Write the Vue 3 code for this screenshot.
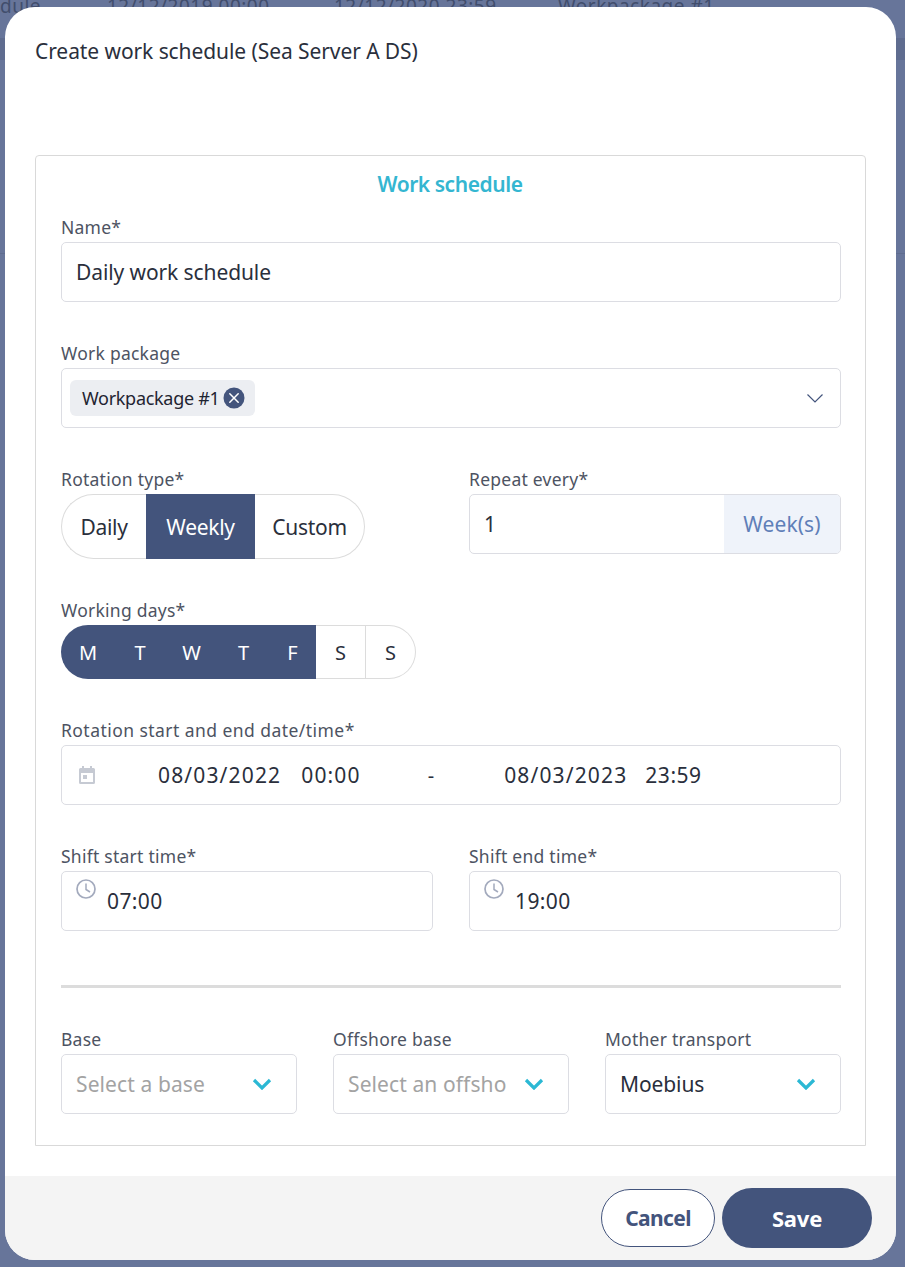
<script setup>
const rotation = [
  { label: 'Daily', cls: 'rot-a' },
  { label: 'Weekly', cls: 'rot-b on' },
  { label: 'Custom', cls: 'rot-c' },
]
const days = [
  { d: 'M', on: true }, { d: 'T', on: true }, { d: 'W', on: true },
  { d: 'T', on: true }, { d: 'F', on: true }, { d: 'S', on: false }, { d: 'S', on: false },
]
const selects = [
  { label: 'Base', value: 'Select a base', ph: true },
  { label: 'Offshore base', value: 'Select an offsho', ph: true },
  { label: 'Mother transport', value: 'Moebius', ph: false },
]
const shifts = [
  { label: 'Shift start time*', value: '07:00' },
  { label: 'Shift end time*', value: '19:00' },
]
</script>

<template>
  <div class="page">
    <div class="backdrop">
      <div class="bg-row">
        <span class="c0">dule</span>
        <span class="c1">12/12/2019 00:00</span>
        <span class="c2">12/12/2020 23:59</span>
        <span class="c3">Workpackage #1</span>
      </div>
      <div class="bg-band"></div>
      <div class="bg-line"></div>
    </div>

    <div class="modal">
      <h1 class="title">Create work schedule (Sea Server A DS)</h1>
      <section class="card">
        <h2 class="card-title">Work schedule</h2>

        <div class="field">
          <label>Name*</label>
          <div class="box"><span class="val">Daily work schedule</span></div>
        </div>

        <div class="field">
          <label>Work package</label>
          <div class="box between tagbox">
            <span class="tag">
              <span class="tag-text">Workpackage #1</span>
              <svg class="tag-x" width="22" height="22" viewBox="0 0 22 22">
                <circle cx="11" cy="11" r="10.5" fill="#43547c" />
                <path d="M6.800 6.800l8.400 8.400M15.200 6.800l-8.400 8.400" stroke="#fff" stroke-width="1.500" stroke-linecap="round" fill="none" />
              </svg>
            </span>
            <svg width="18" height="10" viewBox="0 0 18 10">
              <path d="M1.500 1.500L9 9l7.500-7.500" stroke="#43547c" stroke-width="1.200" fill="none" />
            </svg>
          </div>
        </div>

        <div class="two">
          <div class="field">
            <label>Rotation type*</label>
            <div class="rot">
              <span v-for="r in rotation" :key="r.label" :class="r.cls">{{ r.label }}</span>
            </div>
          </div>
          <div class="field">
            <label>Repeat every*</label>
            <div class="box repeat">
              <span class="val repeat-val">1</span>
              <span class="suffix">Week(s)</span>
            </div>
          </div>
        </div>

        <div class="field">
          <label>Working days*</label>
          <div class="daysrow">
            <span v-for="(x, i) in days" :key="i" class="day" :class="{ on: x.on }">{{ x.d }}</span>
          </div>
        </div>

        <div class="field">
          <label class="wide">Rotation start and end date/time*</label>
          <div class="box dates">
            <svg class="cal" width="16" height="18" viewBox="0 0 16 18">
              <path fill="#c6cad3" d="M3 0h2v2h6V0h2v2h1.500A1.500 1.500 0 0 1 16 3.500v13a1.500 1.500 0 0 1-1.500 1.500h-13A1.500 1.500 0 0 1 0 16.500v-13A1.500 1.500 0 0 1 1.500 2H3zM2 7v9h12V7z" />
              <rect x="4" y="9" width="4" height="4" fill="#c6cad3" />
            </svg>
            <span class="val d1">08/03/2022</span>
            <span class="val d2">00:00</span>
            <span class="dash">-</span>
            <span class="val d3">08/03/2023</span>
            <span class="val d4">23:59</span>
          </div>
        </div>

        <div class="two shifts">
          <div v-for="s in shifts" :key="s.label" class="field">
            <label>{{ s.label }}</label>
            <div class="box shift">
              <svg class="clock" width="20" height="20" viewBox="0 0 20 20">
                <circle cx="10" cy="10" r="9" fill="none" stroke="#a3aabd" stroke-width="1.700" />
                <path d="M10 4.500V10.500l4 2.500" fill="none" stroke="#a3aabd" stroke-width="1.500" />
              </svg>
              <span class="val time">{{ s.value }}</span>
            </div>
          </div>
        </div>

        <hr class="rule" />

        <div class="three">
          <div v-for="s in selects" :key="s.label" class="field">
            <label>{{ s.label }}</label>
            <div class="box between sel">
              <span class="val" :class="{ ph: s.ph }">{{ s.value }}</span>
              <svg class="chev" width="20" height="12" viewBox="0 0 20 12">
                <path d="M2 2l8 8 8-8" stroke="#2bb8d4" stroke-width="3.200" fill="none" />
              </svg>
            </div>
          </div>
        </div>
      </section>

      <footer class="foot">
        <button class="btn cancel" type="button">Cancel</button>
        <button class="btn save" type="button">Save</button>
      </footer>
    </div>
  </div>
</template>

<style>
html, body { margin: 0; background: #67759a; }
</style>

<style scoped>
.page {
  position: relative;
  width: 905px;
  height: 1267px;
  overflow: hidden;
  background: #67759a;
  font-family: "Noto Sans", "Open Sans", sans-serif;
  color: #2a2f3c;
}
.backdrop { position: absolute; inset: 0; }
.bg-row { position: relative; height: 38px; color: #414d6c; font-size: 19px; letter-spacing: 0.5px; }
.bg-row span { position: absolute; top: -7px; line-height: 26px; }
.c0 { left: 0; }
.c1 { left: 107px; }
.c2 { left: 334px; }
.c3 { left: 558px; }
.bg-band { height: 22px; background: #5f6c8f; }
.bg-line { height: 1px; margin-top: 193px; background: #5f6c8f; }

.modal {
  position: relative;
  box-sizing: border-box;
  width: 891px;
  height: 1253px;
  margin: 7px 0 0 5px;
  background: #fff;
  border-radius: 30px;
  overflow: hidden;
  display: flex;
  flex-direction: column;
}
.title {
  margin: 0;
  height: 148px;
  padding: 29px 0 0 30px;
  box-sizing: border-box;
  font-weight: 400;
  font-size: 21px;
  line-height: 30px;
  letter-spacing: -0.08px;
  color: #2a2f3c;
}
.card {
  box-sizing: border-box;
  width: 831px;
  height: 991px;
  margin-left: 30px;
  padding: 0 24px 0 25px;
  border: 1px solid #d9d9d9;
  border-top-left-radius: 4px;
  border-top-right-radius: 4px;
  display: flex;
  flex-direction: column;
}
.card-title {
  margin: 0;
  height: 60px;
  padding: 13px 2px 0 0;
  box-sizing: border-box;
  text-align: center;
  font-size: 21px;
  line-height: 30px;
  font-weight: 600;
  letter-spacing: -0.45px;
  color: #34b6d1;
}
.field { margin-bottom: 40px; }
label {
  display: block;
  height: 26px;
  font-size: 17.500px;
  line-height: 22px;
  letter-spacing: 0.25px;
  color: #4d5362;
}
.wide { letter-spacing: 0.45px; }
.box {
  box-sizing: border-box;
  height: 60px;
  border: 1px solid #dcdde3;
  border-radius: 5px;
  display: flex;
  align-items: center;
  padding: 0 14px;
  background: #fff;
}
.between { justify-content: space-between; }
.val {
  font-size: 21px;
  letter-spacing: -0.1px;
  color: #2a2f3c;
  white-space: nowrap;
}
.tagbox { padding: 0 16px 0 8px; }
.tag {
  display: flex;
  align-items: center;
  height: 36px;
  padding: 0 10px 0 12px;
  background: #eceef2;
  border-radius: 6px;
}
.tag-text { font-size: 18px; letter-spacing: -0.3px; color: #1f2431; margin-right: 4px; }
.two { display: grid; grid-template-columns: 1fr 1fr; column-gap: 36px; }
.two .field { margin-bottom: 40px; }
.rot {
  display: flex;
  width: 304px;
  height: 65px;
  align-items: stretch;
  font-size: 21px;
  letter-spacing: -0.3px;
}
.rot span { display: flex; align-items: center; justify-content: center; box-sizing: border-box; }
.rot-a {
  width: 85px;
  border: 1px solid #dcdcdc;
  border-right: 0;
  border-radius: 33px 0 0 33px;
}
.rot-b { width: 109px; }
.rot-c {
  flex: 1;
  border: 1px solid #dcdcdc;
  border-left: 0;
  border-radius: 0 33px 33px 0;
}
.on { background: #43547c; color: #fff; }
.repeat { padding: 0 0 0 14px; justify-content: space-between; align-items: stretch; overflow: hidden; }
.repeat-val { align-self: center; }
.suffix {
  width: 116px;
  display: flex;
  align-items: center;
  justify-content: center;
  background: #eff3fa;
  color: #5f7fb8;
  font-size: 21px;
  letter-spacing: 0.1px;
}
.daysrow {
  display: flex;
  width: 355px;
  height: 54px;
  font-size: 20px;
}
.day {
  box-sizing: border-box;
  display: flex;
  align-items: center;
  justify-content: center;
}
.day:not(.on) { border: 1px solid #dcdcdc; border-left: 0; }
.day:nth-child(1) { width: 54px; border-radius: 27px 0 0 27px; }
.day:nth-child(2) { width: 50px; }
.day:nth-child(3) { width: 53px; }
.day:nth-child(4) { width: 51px; }
.day:nth-child(5) { width: 47px; }
.day:nth-child(6) { width: 50px; }
.day:nth-child(7) { flex: 1; border-radius: 0 27px 27px 0; }
.dates { padding: 0 0 0 17px; }
.dates .val { letter-spacing: 1.150px; }
.dates .d4 { letter-spacing: 0.5px; }
.cal { flex: none; }
.d1 { margin-left: 63px; }
.d2 { margin-left: 20px; }
.dash { margin-left: 67px; font-size: 20px; color: #2a2f3c; }
.d3 { margin-left: 70px; }
.d4 { margin-left: 18px; }
.shifts .field { margin-bottom: 0; }
.shift { position: relative; padding: 0 0 0 45px; }
.time { letter-spacing: 0.4px; }
.clock { position: absolute; left: 14px; top: 7px; }
.rule {
  margin: 54px 0 40px;
  height: 3px;
  border: 0;
  background: #dcdcdc;
}
.three { display: grid; grid-template-columns: repeat(3, 1fr); column-gap: 36px; }
.three .field { margin-bottom: 0; }
.sel { padding: 0 24px 0 14px; overflow: hidden; }
.ph { color: #a3a3a3; letter-spacing: 0.1px; }
.chev { flex: none; margin-left: 8px; }
.foot {
  flex: 1;
  margin-top: 30px;
  background: #f4f4f4;
  display: flex;
  justify-content: flex-end;
  align-items: flex-start;
  padding: 12px 24px 0 0;
  gap: 7px;
}
.btn {
  font-family: inherit;
  font-weight: 700;
  border-radius: 30px;
}
.cancel {
  width: 114px;
  height: 58px;
  margin-top: 1px;
  font-size: 21px;
  letter-spacing: -0.6px;
  background: #fff;
  color: #43547c;
  border: 1px solid #43547c;
}
.save {
  width: 150px;
  height: 60px;
  font-size: 22px;
  letter-spacing: -0.2px;
  background: #43547c;
  color: #fff;
  border: 0;
}
</style>
